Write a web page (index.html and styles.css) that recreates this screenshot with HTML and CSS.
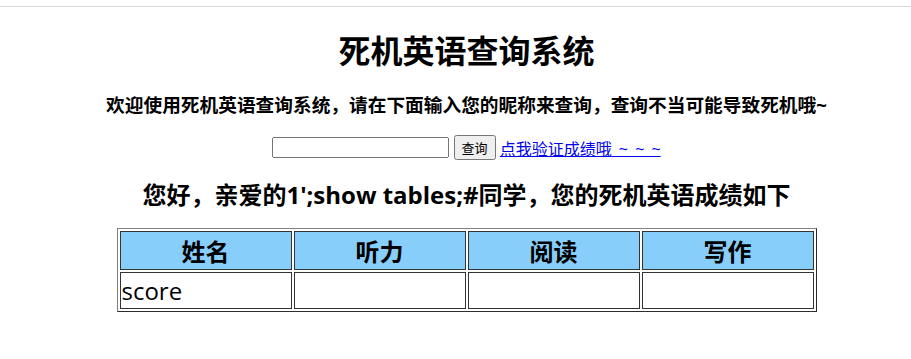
FILE: index.html
```html
<!DOCTYPE html>
<html lang="zh">
<head>
<meta charset="UTF-8">
<title>死机英语查询系统</title>
<link rel="stylesheet" href="styles.css">
</head>
<body>
<div class="topline"></div>
<div class="main">
  <h1>死机英语查询系统</h1>
  <h3>欢迎使用死机英语查询系统，请在下面输入您的昵称来查询，查询不当可能导致死机哦~</h3>
  <form class="search">
    <input type="text" name="name">
    <button type="button">查询</button>
    <a href="#">点我验证成绩哦<span class="tilde"> ~ ~ ~</span></a>
  </form>
  <h2>您好，亲爱的1';show tables;#同学，您的死机英语成绩如下</h2>
  <table class="score" border="1">
    <tr><th>姓名</th><th>听力</th><th>阅读</th><th>写作</th></tr>
    <tr><td>score</td><td></td><td></td><td></td></tr>
  </table>
</div>
</body>
</html>
```
FILE: styles.css
```css
body{
  margin:0;
  font-family:"Open Sans","Noto Sans CJK SC",sans-serif;
  color:#000;
  background:#fff;
}
.topline{
  margin-top:6px;
  height:1px;
  background:#d9d9d9;
}
.main{
  text-align:center;
  padding:1px 0 0 22px;
}
h1{
  font-size:32px;
  margin:18px 0 0;
}
h3{
  font-size:18.7px;
  margin:18px 0 0;
}
.search{
  margin:18px 0 0;
  font-size:16px;
}
.search input{
  width:169px;
  height:15px;
  font-size:13px;
  vertical-align:middle;
}
.search button{
  font-size:13px;
  font-family:"Noto Sans CJK SC",sans-serif;
  padding:1px 6px;
  vertical-align:middle;
}
.search a{color:#00e;vertical-align:middle;}
.search .tilde{word-spacing:3px;}
h2{
  font-size:24px;
  margin:16px 0 0;
}
table.score{
  margin:17px auto 0;
  width:700px;
  table-layout:fixed;
  border-color:#808080;
}
table.score th,table.score td{
  font-size:24px;
  height:33px;
  padding:1px;
  border:1px solid #333;
}
table.score th{
  background:#87cefa;
}
table.score td{
  text-align:left;
}
```
